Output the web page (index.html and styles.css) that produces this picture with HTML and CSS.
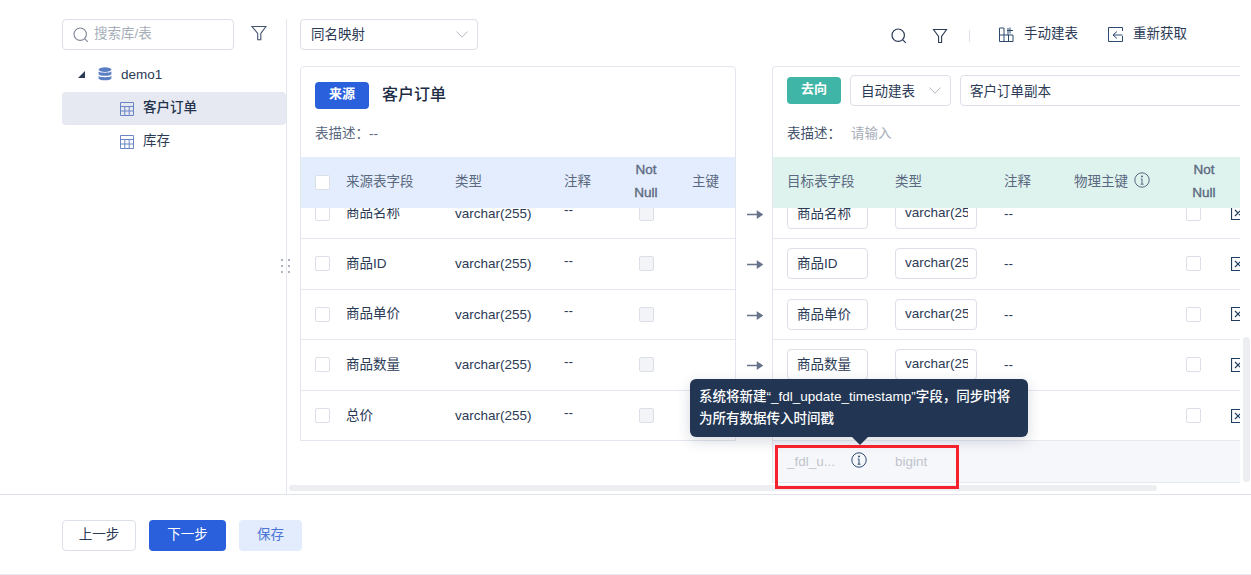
FILE: index.html
```html
<!DOCTYPE html>
<html lang="zh">
<head>
<meta charset="utf-8">
<title>字段映射</title>
<link rel="stylesheet" href="styles.css">
</head>
<body>
<div class="page">
  <main class="main">
    <aside class="sidebar">
      <div class="side-top">
        <div class="search">
          <svg class="ic-search" viewBox="0 0 16 16"><circle cx="7.2" cy="7.2" r="6.2"/><path d="M11.8 11.8l3 3"/></svg>
          <span>搜索库/表</span>
        </div>
        <svg class="ic-filter" viewBox="0 0 16 16"><path d="M1 1.5h14L9.8 8.5v6.2H6.7V8.5z"/></svg>
      </div>
      <div class="tree">
        <div class="tree-db">
          <span class="tri"></span>
          <svg class="ic-db" viewBox="0 0 14 14"><ellipse cx="7" cy="2.6" rx="6.4" ry="2.4"/><path d="M.6 4.6c1.2 1.6 11.6 1.6 12.8 0v2.6c-1.2 2-11.6 2-12.8 0zM.6 9.1c1.2 1.6 11.6 1.6 12.8 0v2.3c-1.2 2.6-11.6 2.6-12.8 0z"/></svg>
          <span>demo1</span>
        </div>
        <div class="tree-item selected">
          <svg class="ic-table" viewBox="0 0 14 14"><path d="M.5.5h13v13H.5zM.5 4.5h13M.5 9h13M4.8 4.5v9M9.2 4.5v9"/></svg>
          <span>客户订单</span>
        </div>
        <div class="tree-item">
          <svg class="ic-table" viewBox="0 0 14 14"><path d="M.5.5h13v13H.5zM.5 4.5h13M.5 9h13M4.8 4.5v9M9.2 4.5v9"/></svg>
          <span>库存</span>
        </div>
      </div>
      <svg class="grip" viewBox="0 0 10 14"><path d="M1 0v2M8 0v2M1 6v2M8 6v2M1 12v2M8 12v2"/></svg>
    </aside>

    <section class="content">
      <div class="toolbar">
        <div class="select map-select"><span>同名映射</span><svg class="chev" viewBox="0 0 12 7"><path d="M.5.5L6 6.2 11.5.5"/></svg></div>
        <div class="tools">
          <svg class="tool-search" viewBox="0 0 16 16"><circle cx="7.2" cy="7.2" r="6.2"/><path d="M11.8 11.8l3 3"/></svg>
          <svg class="tool-filter" viewBox="0 0 16 16"><path d="M1.5 1.5h13L9.6 8.5v6H6.6v-6z"/></svg>
          <span class="divider"></span>
          <span class="tool-btn first">
            <svg viewBox="0 0 15 15"><path d="M.5 1v13.5h13.5V8M.5 8H14M5 1v13.5M5 1H.5M9.5 8v6.5M9 1v7M8 3.5h6M11 .5v6"/></svg><span>手动建表</span>
          </span>
          <span class="tool-btn second">
            <svg viewBox="0 0 15 15"><path d="M14.5 4V.5H.5v14h14V9M9 4.5L5 8l4 3.5M5 8h9.5"/></svg><span>重新获取</span>
          </span>
        </div>
      </div>

      <div class="mapping">
        <div class="card source">
          <div class="card-title">
            <span class="badge blue">来源</span>
            <h2>客户订单</h2>
          </div>
          <div class="desc">表描述：<span class="dash">--</span></div>
          <div class="row-src head blue-head">
            <span class="check"></span><span>来源表字段</span><span>类型</span><span>注释</span><span class="nn">Not Null</span><span class="pk">主键</span>
          </div>
          <div class="body">
            <div class="rows">
              <div class="row-src line"><span class="check"></span><span class="cjk">商品名称</span><span>varchar(255)</span><span class="up">--</span><span class="check dis"></span></div>
              <div class="row-src line"><span class="check"></span><span class="cjk">商品ID</span><span>varchar(255)</span><span class="up">--</span><span class="check dis"></span></div>
              <div class="row-src line"><span class="check"></span><span class="cjk">商品单价</span><span>varchar(255)</span><span class="up">--</span><span class="check dis"></span></div>
              <div class="row-src line"><span class="check"></span><span class="cjk">商品数量</span><span>varchar(255)</span><span class="up">--</span><span class="check dis"></span></div>
              <div class="row-src line"><span class="check"></span><span class="cjk">总价</span><span>varchar(255)</span><span class="up">--</span><span class="check dis"></span></div>
            </div>
          </div>
        </div>

        <div class="arrows">
          <div class="rows">
            <div class="arrow-row"><svg viewBox="0 0 16 9"><path d="M0 4.5h13M10.5 1.5l4.5 3-4.5 3z"/></svg></div>
            <div class="arrow-row"><svg viewBox="0 0 16 9"><path d="M0 4.5h13M10.5 1.5l4.5 3-4.5 3z"/></svg></div>
            <div class="arrow-row"><svg viewBox="0 0 16 9"><path d="M0 4.5h13M10.5 1.5l4.5 3-4.5 3z"/></svg></div>
            <div class="arrow-row"><svg viewBox="0 0 16 9"><path d="M0 4.5h13M10.5 1.5l4.5 3-4.5 3z"/></svg></div>
            <div class="arrow-row"><svg viewBox="0 0 16 9"><path d="M0 4.5h13M10.5 1.5l4.5 3-4.5 3z"/></svg></div>
          </div>
        </div>

        <div class="card target">
          <div class="card-title target-title">
            <span class="badge teal">去向</span>
            <div class="select build-select"><span>自动建表</span><svg class="chev" viewBox="0 0 12 7"><path d="M.5.5L6 6.2 11.5.5"/></svg></div>
            <div class="select name-input"><span>客户订单副本</span></div>
          </div>
          <div class="desc target-desc">表描述：<span class="placeholder">请输入</span></div>
          <div class="row-dst head green-head">
            <span>目标表字段</span><span>类型</span><span>注释</span>
            <span class="with-info">物理主键<svg class="ic-info" viewBox="0 0 16 16"><circle cx="8" cy="8" r="7.2"/><path d="M8 7v5M6.6 12.2h3M6.8 7h1.2"/><circle class="dot" cx="8" cy="4.4" r="1"/></svg></span>
            <span class="nn">Not Null</span>
          </div>
          <div class="body">
            <div class="rows">
              <div class="row-dst line"><span class="field"><span>商品名称</span></span><span class="field"><span>varchar(255)</span></span><span>--</span><span></span><span class="check"></span><svg class="ic-del" viewBox="0 0 14 14"><path d="M.5.5h13v13H.5zM4 4l6 6M10 4l-6 6"/></svg></div>
              <div class="row-dst line"><span class="field"><span>商品ID</span></span><span class="field"><span>varchar(255)</span></span><span>--</span><span></span><span class="check"></span><svg class="ic-del" viewBox="0 0 14 14"><path d="M.5.5h13v13H.5zM4 4l6 6M10 4l-6 6"/></svg></div>
              <div class="row-dst line"><span class="field"><span>商品单价</span></span><span class="field"><span>varchar(255)</span></span><span>--</span><span></span><span class="check"></span><svg class="ic-del" viewBox="0 0 14 14"><path d="M.5.5h13v13H.5zM4 4l6 6M10 4l-6 6"/></svg></div>
              <div class="row-dst line"><span class="field"><span>商品数量</span></span><span class="field"><span>varchar(255)</span></span><span>--</span><span></span><span class="check"></span><svg class="ic-del" viewBox="0 0 14 14"><path d="M.5.5h13v13H.5zM4 4l6 6M10 4l-6 6"/></svg></div>
              <div class="row-dst line"><span class="field"><span>总价</span></span><span class="field"><span>varchar(255)</span></span><span>--</span><span></span><span class="check"></span><svg class="ic-del" viewBox="0 0 14 14"><path d="M.5.5h13v13H.5zM4 4l6 6M10 4l-6 6"/></svg></div>
            </div>
          </div>
          <div class="row-dst sys-row">
            <span class="sys-name"><span>_fdl_u...</span><svg class="ic-info dark" viewBox="0 0 16 16"><circle cx="8" cy="8" r="7.2"/><path d="M8 7v5M6.6 12.2h3M6.8 7h1.2"/><circle class="dot" cx="8" cy="4.4" r="1"/></svg></span>
            <span>bigint</span>
          </div>
        </div>
      </div>
      <div class="h-scroll"></div>
      <div class="v-scroll"></div>
    </section>
  </main>

  <footer class="footer">
    <button class="btn ghost">上一步</button>
    <button class="btn primary">下一步</button>
    <button class="btn soft">保存</button>
  </footer>

  <div class="tooltip">系统将新建“_fdl_update_timestamp”字段，同步时将为所有数据传入时间戳</div>
  <div class="red-frame"></div>
</div>
</body>
</html>
```

FILE: styles.css
```css
* { box-sizing: border-box; }
html, body { margin: 0; height: 100%; overflow: hidden; background: #fff; }
body {
  font-family: "Liberation Sans", "Noto Sans CJK SC", sans-serif;
  font-size: 13.5px;
  color: #2b3a55;
}
svg { display: block; flex: none; fill: none; }
.page { position: relative; width: 1251px; height: 575px; }

.main { display: flex; height: 495px; border-bottom: 1px solid #dfe3ea; padding-top: 19px; }

/* sidebar */
.sidebar { position: relative; width: 287px; flex: none; border-right: 1px solid #e3e6ee; padding-left: 62px; }
.side-top { display: flex; align-items: center; height: 31px; }
.search {
  width: 172px; height: 31px; display: flex; align-items: center; gap: 5px; padding-left: 10px;
  border: 1px solid #dcdfe8; border-radius: 4px; color: #a8aeb9;
}
.search span { padding-bottom: 6px; }
.ic-search { width: 16px; height: 16px; stroke: #7f8797; stroke-width: 1.1; }
.ic-filter { width: 16px; height: 16px; margin-left: 17px; margin-top: -3px; stroke: #44546c; stroke-width: 1.1; }
.tree { margin-top: 8px; }
.tree-db { display: flex; align-items: center; height: 32px; padding-left: 16px; margin-bottom: 2px; }
.tri { width: 0; height: 0; border-left: 7px solid transparent; border-bottom: 7px solid #2b3a55; margin-right: 13px; }
.ic-db { width: 14px; height: 14px; fill: #5b7ec4; margin-right: 9px; }
.tree-item { display: flex; align-items: center; height: 33px; padding-left: 58px; gap: 9px; border-radius: 4px; }
.tree-item span { padding-bottom: 5px; }
.tree-item.selected { background: #e6e9f1; font-weight: 500; color: #24334d; }
.ic-table { width: 14px; height: 14px; stroke: #6a85c6; stroke-width: 1; }
.grip { position: absolute; left: 281px; top: 240px; width: 10px; height: 14px; stroke: #8a93a5; stroke-width: 1.4; }

/* content */
.content { position: relative; flex: 1; min-width: 0; }
.toolbar { display: flex; align-items: center; justify-content: space-between; height: 31px; margin-left: 13px; }
.select {
  display: flex; align-items: center; justify-content: space-between; height: 31px; padding: 0 9px 0 10px;
  border: 1px solid #dcdfe8; border-radius: 4px; color: #2b3a55; background: #fff; flex: none;
}
.select span { padding-bottom: 1px; }
.map-select span { padding-bottom: 3px; }
.map-select { width: 178px; }
.chev { width: 12px; height: 7px; stroke: #b4b9c4; stroke-width: 1; }
.tools { display: flex; align-items: center; width: 296px; margin-right: 64px; height: 31px; }
.tool-search { width: 16px; height: 16px; stroke: #2b3a55; stroke-width: 1.2; margin-top: 2px; }
.tool-filter { width: 16px; height: 16px; margin-left: 25px; margin-top: 2px; stroke: #2b3a55; stroke-width: 1.1; }
.divider { width: 1px; height: 12px; background: #dfe3ea; margin: 2px 0 0 21px; }
.tool-btn { display: flex; align-items: center; gap: 10px; margin-left: 29px; margin-top: -1px; }
.tool-btn.second { margin-left: 30px; }
.tool-btn span { padding-bottom: 4px; }
.tool-btn svg { width: 15px; height: 15px; stroke: #2d4a6e; stroke-width: 1; }

.mapping { display: flex; align-items: flex-start; margin: 16px 0 0 13px; width: 940px; height: 417px; overflow: hidden; }
.card { flex: none; border: 1px solid #e3e6ee; border-radius: 4px 4px 0 0; background: #fff; }
.source { width: 436px; }
.target { width: 520px; height: 417px; border-bottom: 0; }
.card-title { display: flex; align-items: center; height: 57px; padding: 0 0 0 14px; }
.target-title { height: 47px; margin-bottom: 10px; }
.card-title h2 { margin: -5px 0 0 13px; font-size: 16px; font-weight: 500; color: #1e2c45; }
.badge { flex: none; width: 54px; height: 27px; line-height: 24px; text-align: center; border-radius: 4px; color: #fff; font-size: 13px; font-weight: 700; }
.blue { background: #2b60dc; }
.teal { background: #3fb5a8; }
.build-select { width: 101px; margin-left: 9px; }
.name-input { width: 400px; margin-left: 9px; padding-left: 9px; }
.desc { height: 33px; padding: 1px 0 0 14px; line-height: 18px; color: #5a6980; }
.dash { color: #5a6980; }
.placeholder { color: #a8aeb9; margin-left: 10px; }
.target-desc { color: #45536b; }

.head { height: 51px; color: #5a6980; }
.head > span { padding-bottom: 6px; }
.head > .check { padding-bottom: 0; }
.blue-head { background: #e4edfd; }
.green-head { background: #def2ee; }
.head > .nn { width: 44px; text-align: center; line-height: 23px; padding-bottom: 4px; -webkit-text-stroke: .35px #5a6980; }
.row-src { display: grid; grid-template-columns: 45px 109px 109px 60px 44px 1fr; align-items: center; }
.row-src .check { margin-left: 14px; }
.row-src .nn, .row-src .check.dis { justify-self: center; margin-left: 0; }
.cjk { padding-bottom: 4px; }
.pk { padding-left: 24px; }
.row-dst { display: grid; grid-template-columns: 108px 109px 70px 109px 48px 1fr; align-items: center; padding-left: 14px; }
.row-dst > .check { margin-left: 3px; }
.row-dst .nn { margin-left: -1px; }
.with-info { display: flex; align-items: center; gap: 6px; white-space: nowrap; }
.ic-info { width: 16px; height: 16px; stroke: #5a6980; stroke-width: 1; }
.ic-info .dot { fill: #5a6980; stroke: none; }
.ic-info.dark { stroke: #2b4a72; }
.ic-info.dark .dot { fill: #2b4a72; }

.body { height: 233px; overflow: hidden; }
.source .body { height: 232px; }
.rows { margin-top: -19.6px; }
.line, .arrow-row { height: 50.6px; }
.line { border-bottom: 1px solid #e6e8f0; }
.up { margin-top: -7px; }
.check { width: 15px; height: 15px; border: 1px solid #dcdfe8; border-radius: 2px; background: #fff; }
.check.dis { background: #f3f4f8; }
.field {
  display: block; width: 81px; height: 31px; line-height: 29px; padding: 0 10px 0 9px; border: 1px solid #dcdfe8; border-radius: 4px; overflow: hidden; white-space: nowrap; background: #fff;
}
.field > span { display: block; overflow: hidden; }
.row-dst .field:nth-child(2) { width: 82px; line-height: 28px; padding-right: 8px; }
.ic-del { width: 14px; height: 14px; stroke: #1f3d5f; stroke-width: 1.2; }

.arrows { flex: none; width: 36px; margin-top: 142px; height: 233px; overflow: hidden; }
.arrow-row { display: flex; align-items: center; justify-content: center; padding: 1px 0 0 2px; }
.arrow-row svg { width: 16px; height: 9px; stroke: #66738a; fill: #66738a; stroke-width: 1.5; }

.sys-row { height: 42px; background: #f6f7fb; border-bottom: 1px solid #e6e8f0; color: #c0c4cc; grid-template-columns: 108px 1fr; }
.sys-name { display: flex; align-items: center; gap: 14px; white-space: nowrap; }
.sys-name .ic-info { margin-top: -3px; margin-left: 2px; }

.h-scroll { width: 868px; height: 6px; margin: 2px 0 0 2px; border-radius: 3px; background: #eceef2; }
.v-scroll { position: absolute; right: 1px; top: 318px; width: 7px; height: 145px; border-radius: 4px; background: #eceef2; }

/* footer */
.footer { display: flex; gap: 13px; padding: 25px 0 0 62px; height: 80px; border-bottom: 1px solid #e8eaf0; }
.btn { height: 31px; border-radius: 4px; border: 1px solid transparent; font: inherit; padding: 0 0 5px; }
.ghost { width: 74px; background: #fff; border-color: #dce0e8; color: #2b3a55; }
.primary { width: 77px; background: #2b60dc; color: #fff; }
.soft { width: 63px; background: #e3ecfc; color: #4a74d8; }

/* overlays */
.tooltip {
  position: absolute; left: 690px; top: 379px; width: 338px; height: 58px; padding: 7px 9px;
  background: #223654; color: #fff; border-radius: 6px; line-height: 22px; font-weight: 500;
  box-shadow: 0 4px 14px rgba(30, 45, 75, .18);
}
.tooltip::after {
  content: ""; position: absolute; left: 162px; bottom: -8px; width: 0; height: 0;
  border-left: 8px solid transparent; border-right: 8px solid transparent; border-top: 8px solid #223654;
}
.red-frame { position: absolute; left: 775px; top: 445px; width: 184px; height: 44px; border: 3px solid #f5222d; }
```
